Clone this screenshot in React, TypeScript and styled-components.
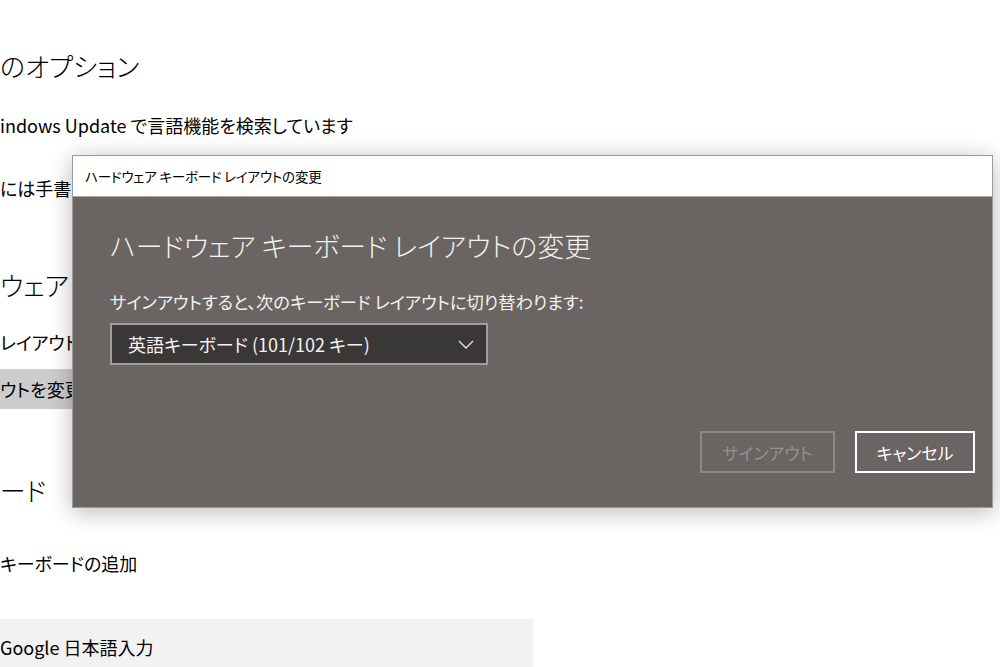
import React from 'react'
import styled, { createGlobalStyle } from 'styled-components'

const GlobalStyle = createGlobalStyle`
  html, body {
    margin: 0;
    padding: 0;
    background: #ffffff;
  }
  body {
    font-family: 'Noto Sans CJK JP', 'Noto Sans', 'Liberation Sans', sans-serif;
    font-feature-settings: 'palt';
    color: #000000;
  }
`

const App: React.FC = () => {
  return (
    <Page>
      <GlobalStyle />
      <Settings>
        <SectionTitle>のオプション</SectionTitle>
        <Line $gap={28}>indows Update で言語機能を検索しています</Line>
        <Line $gap={37}>には手書</Line>
        <SectionTitle $gap={66}>ウェア</SectionTitle>
        <Line $gap={26}> レイアウト</Line>
        <ActionBar>ウトを変更</ActionBar>
        <SectionTitle $gap={63}>ード</SectionTitle>
        <Line $gap={42}>キーボードの追加</Line>
        <KeyboardRow>
          <Line>Google 日本語入力</Line>
          <SubLine>入力方式エディター</SubLine>
        </KeyboardRow>
      </Settings>

      <Dialog>
        <TitleBar>ハードウェア キーボード レイアウトの変更</TitleBar>
        <DialogBody>
          <DialogHeading>ハードウェア キーボード レイアウトの変更</DialogHeading>
          <DialogLabel>サインアウトすると、次のキーボード レイアウトに切り替わります:</DialogLabel>
          <Select>
            <span>英語キーボード (101/102 キー)</span>
            <svg width="16" height="9" viewBox="0 0 16 9">
              <polyline points="1,1 8,8 15,1" fill="none" stroke="#e6e3e1" strokeWidth="1.4" />
            </svg>
          </Select>
          <Buttons>
            <DialogButton $width={135} $disabled>サインアウト</DialogButton>
            <DialogButton $width={120}>キャンセル</DialogButton>
          </Buttons>
        </DialogBody>
      </Dialog>
    </Page>
  )
}

export default App

const Page = styled.div`
  position: relative;
  width: 1000px;
  height: 667px;
  overflow: hidden;
  background: #ffffff;
`

const Settings = styled.div`
  display: flex;
  flex-direction: column;
  width: 533px;
  padding-top: 48px;
`

const SectionTitle = styled.div<{ $gap?: number }>`
  margin-top: ${(p) => p.$gap ?? 0}px;
  font-size: 26px;
  line-height: 36px;
  font-weight: 300;
  white-space: nowrap;
`

const Line = styled.div<{ $gap?: number }>`
  margin-top: ${(p) => p.$gap ?? 0}px;
  font-size: 18px;
  line-height: 26px;
  white-space: nowrap;
`

const ActionBar = styled.div`
  margin-top: 14px;
  width: 320px;
  height: 40px;
  display: flex;
  align-items: center;
  background: #cccccc;
  font-size: 18px;
  white-space: nowrap;
`

const KeyboardRow = styled.div`
  margin-top: 43px;
  padding-top: 15px;
  height: 60px;
  background: #f2f2f2;
`

const SubLine = styled.div`
  margin-top: 6px;
  font-size: 14px;
  line-height: 20px;
  color: #666666;
`

const Dialog = styled.div`
  position: absolute;
  left: 72px;
  top: 155px;
  width: 919px;
  height: 351px;
  display: flex;
  flex-direction: column;
  border: 1px solid #9a9a9a;
  box-shadow: 0 4px 22px rgba(0, 0, 0, 0.28);
`

const TitleBar = styled.div`
  height: 40px;
  display: flex;
  align-items: center;
  padding-left: 12px;
  background: #ffffff;
  border-bottom: 1px solid #a8a8a8;
  font-size: 13.5px;
  letter-spacing: -0.2px;
  color: #000000;
`

const DialogBody = styled.div`
  flex: 1;
  display: flex;
  flex-direction: column;
  align-items: flex-start;
  padding: 29px 17px 34px 37px;
  background: #6a6563;
  color: #ffffff;
`

const DialogHeading = styled.div`
  font-size: 27px;
  line-height: 40px;
  font-weight: 300;
  color: #f4f2f1;
`

const DialogLabel = styled.div`
  margin-top: 24px;
  font-size: 17.3px;
  line-height: 24px;
  color: #f4f2f1;
`

const Select = styled.div`
  margin-top: 9px;
  box-sizing: border-box;
  width: 378px;
  height: 42px;
  display: flex;
  align-items: center;
  justify-content: space-between;
  padding: 0 12px 0 16px;
  background: #3a3737;
  border: 2px solid #a19d9b;
  font-size: 18px;
  color: #f4f2f1;
`

const Buttons = styled.div`
  margin-top: auto;
  align-self: flex-end;
  display: flex;
  gap: 20px;
`

const DialogButton = styled.div<{ $disabled?: boolean; $width: number }>`
  box-sizing: border-box;
  height: 42px;
  width: ${(p) => p.$width}px;
  display: flex;
  align-items: center;
  justify-content: center;
  font-size: 17px;
  border: 2px solid ${(p) => (p.$disabled ? '#8d8886' : '#ffffff')};
  color: ${(p) => (p.$disabled ? '#96918f' : '#ffffff')};
`
